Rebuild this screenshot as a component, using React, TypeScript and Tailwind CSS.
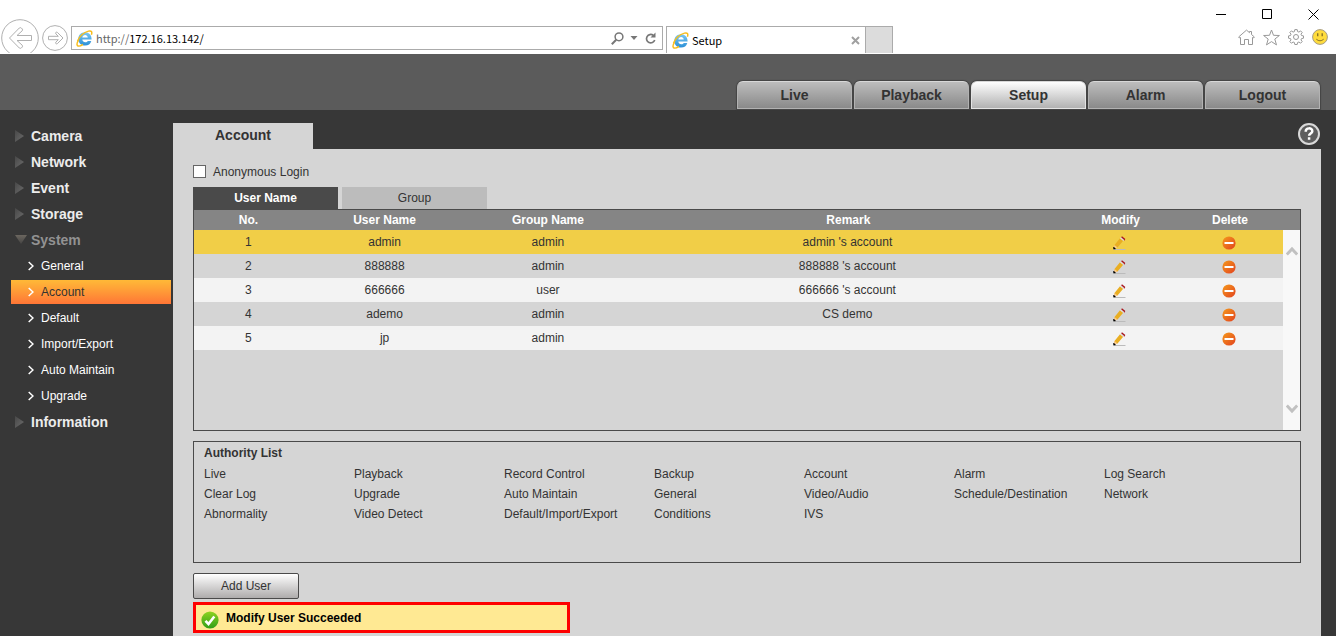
import { useState } from 'react';
import type { ReactNode } from 'react';

type User = {
  name: string;
  group: string;
  remark: string;
};

const navTabs = ['Live', 'Playback', 'Setup', 'Alarm', 'Logout'];

const menuTop = ['Camera', 'Network', 'Event', 'Storage'];

const systemItems = [
  'General',
  'Account',
  'Default',
  'Import/Export',
  'Auto Maintain',
  'Upgrade',
];

const users: User[] = [
  { name: 'admin', group: 'admin', remark: "admin 's account" },
  { name: '888888', group: 'admin', remark: "888888 's account" },
  { name: '666666', group: 'user', remark: "666666 's account" },
  { name: 'ademo', group: 'admin', remark: 'CS demo' },
  { name: 'jp', group: 'admin', remark: '' },
];

const authorities = [
  'Live',
  'Playback',
  'Record Control',
  'Backup',
  'Account',
  'Alarm',
  'Log Search',
  'Clear Log',
  'Upgrade',
  'Auto Maintain',
  'General',
  'Video/Audio',
  'Schedule/Destination',
  'Network',
  'Abnormality',
  'Video Detect',
  'Default/Import/Export',
  'Conditions',
  'IVS',
];

const IeLogo = () => (
  <svg width="17" height="17" viewBox="0 0 17 17" fill="none" className="shrink-0">
    <defs>
      <linearGradient id="ie" x1="0" y1="0" x2="0" y2="1">
        <stop offset="0" stopColor="#7cc8f2" />
        <stop offset="1" stopColor="#2b8fd6" />
      </linearGradient>
    </defs>
    <path
      d="M9 2.300c4.200 0 6.600 2.900 6.600 7.300H6.300c.3 1.900 1.400 2.700 3 2.700 1.200 0 2-.4 2.500-1.300h3.500c-.8 2.900-3 4.600-6.200 4.600-4.200 0-6.700-2.700-6.700-6.600 0-3.900 2.600-6.700 6.600-6.700Zm-2.700 5.200h5.500c-.2-1.600-1.200-2.500-2.700-2.500s-2.500.9-2.800 2.500Z"
      fill="url(#ie)"
      fillRule="evenodd"
    />
    <path
      d="M7 14.500c-2.400 1.500-4.600 2-5.500 1.100-.9-.9-.4-3 1-5.400M1.500 11C3.500 6.500 8 2.300 12.500 1.100c2.800-.7 4 .5 2.900 3.600"
      stroke="#f8bd1c"
      strokeWidth="1.500"
    />
  </svg>
);

const BackButton = () => (
  <button aria-label="Back" className="shrink-0">
    <svg width="38" height="38" viewBox="0 0 38 38" fill="none" stroke="#b0b0b0">
      <circle cx="19" cy="19" r="18.300" />
      <path d="M8.500 19 18.300 9q1-.8 2 0l.9.900q.8 1 0 1.900L16 16.500h14.500v5H16l5.200 4.700q.8 1 0 1.900l-.9.900q-1 .8-2 0Z" />
    </svg>
  </button>
);

const ForwardButton = () => (
  <button aria-label="Forward" className="mt-[6px] shrink-0">
    <svg width="26" height="26" viewBox="0 0 26 26" fill="none" stroke="#b0b0b0">
      <circle cx="13" cy="13" r="12.400" />
      <path d="M21 13l-5.600-5.600q-.9-.6-1.500 0t0 1.500l2.400 2.400H6.500v3.400h9.800l-2.400 2.400q-.6.900 0 1.500t1.500 0Z" />
    </svg>
  </button>
);

const WindowControls = () => (
  <div className="flex h-[26px] items-center justify-end gap-[35px] pr-[17px] pt-[2px]">
    <button aria-label="Minimize">
      <svg width="11" height="11" viewBox="0 0 11 11" stroke="#000">
        <path d="M0 5.500h10" />
      </svg>
    </button>
    <button aria-label="Maximize">
      <svg width="11" height="11" viewBox="0 0 11 11" fill="none" stroke="#000">
        <path d="M.5.500h9v9h-9z" />
      </svg>
    </button>
    <button aria-label="Close">
      <svg width="11" height="11" viewBox="0 0 11 11" stroke="#000">
        <path d="M.5.500l10 10M10.500.500l-10 10" />
      </svg>
    </button>
  </div>
);

const ToolIcons = () => (
  <div className="ml-auto flex h-[22px] items-center gap-2 pr-2">
    <button aria-label="Home">
      <svg width="17" height="17" viewBox="0 0 17 17" fill="none" stroke="#999">
        <path d="M2.500 8.500 1.200 8.800.6 8 8.500 1.100 11.500 3.700V2.500h2v3l2.900 2.500-.6.800-1.300-.3v7h-4v-5h-4v5h-4Z" />
      </svg>
    </button>
    <button aria-label="Favorites">
      <svg width="17" height="17" viewBox="0 0 17 17" fill="none" stroke="#999">
        <path d="M8.500 1l2 5.300 5.900.2-4.600 3.600 1.700 5.800-5-3.300-5 3.300 1.700-5.800L.6 6.500l5.900-.2Z" />
      </svg>
    </button>
    <button aria-label="Tools">
      <svg width="16" height="16" viewBox="0 0 16 16" fill="none" stroke="#999">
        <path d="M6.800.6h2.400l.4 2 1.300.5 1.700-1.200 1.600 1.600L13 5.200l.5 1.300 2 .4v2.300l-2 .4-.5 1.300 1.200 1.700-1.600 1.600-1.700-1.200-1.300.5-.4 2H6.800l-.4-2-1.300-.5-1.700 1.200-1.600-1.600L3 10.900l-.5-1.300-2-.4V6.900l2-.4L3 5.200 1.800 3.500l1.600-1.600 1.700 1.200 1.300-.5Z" />
        <circle cx="8" cy="8" r="2.500" />
      </svg>
    </button>
    <button aria-label="Send a smile">
      <svg width="16" height="16" viewBox="0 0 16 16" fill="none">
        <circle cx="8" cy="8" r="7.400" fill="#ffdc3c" stroke="#a59c86" />
        <path d="M5.700 4.200v3M10.200 4.200v3" stroke="#8a7426" strokeWidth="1.400" />
        <path d="M4.300 10.200q3.700 3.200 7.400 0" stroke="#8a7426" />
      </svg>
    </button>
  </div>
);

const BrowserBar = () => (
  <div className="h-[54px] overflow-hidden bg-white font-['Noto_Sans_CJK_JP',sans-serif] text-[11px] text-black">
    <WindowControls />
    <div className="flex h-[27px] items-start">
      <div className="-mt-[7px] flex h-[34px] items-start gap-[3px] overflow-hidden pl-[1px]">
        <BackButton />
        <ForwardButton />
      </div>
      <div className="ml-[3px] flex h-6 w-[592px] items-center border border-[#ababab] px-1">
        <IeLogo />
        <label htmlFor="address" className="pl-[3px] text-[#666]">
          http://
        </label>
        <input
          id="address"
          defaultValue="172.16.13.142/"
          className="min-w-0 flex-1 bg-transparent outline-none"
        />
        <button aria-label="Search">
          <svg width="13" height="13" viewBox="0 0 13 13" fill="none" stroke="#777">
            <circle cx="8" cy="4.800" r="3.900" strokeWidth="1.500" />
            <path d="M5.200 7.800.8 12.200" strokeWidth="2" />
          </svg>
        </button>
        <button aria-label="Show address list" className="ml-[6px]">
          <svg width="8" height="4" viewBox="0 0 8 4" fill="#777">
            <path d="M.5 0h7L4 4Z" />
          </svg>
        </button>
        <button aria-label="Refresh" className="ml-[7px] mr-[1px]">
          <svg width="12" height="13" viewBox="0 0 12 13" fill="none" stroke="#777">
            <path d="M8.200 3.300A4.200 4.200 0 1 0 9.700 8" strokeWidth="1.700" />
            <path d="M10.500.500v5H5.500Z" fill="#777" stroke="none" />
          </svg>
        </button>
      </div>
      <div className="ml-[3px] flex h-[27px] w-[200px] items-center border border-b-0 border-[#ababab] px-[5px]">
        <IeLogo />
        <span className="flex-1 pl-[3px]">Setup</span>
        <button aria-label="Close tab">
          <svg width="9" height="9" viewBox="0 0 9 9" stroke="#a0a0a0" strokeWidth="2">
            <path d="M1 1l7 7M8 1 1 8" />
          </svg>
        </button>
      </div>
      <button
        aria-label="New tab"
        className="h-[27px] w-[27px] border border-b-0 border-l-0 border-[#ababab] bg-[#dcdcdc]"
      />
      <ToolIcons />
    </div>
  </div>
);

const Header = () => (
  <header className="flex h-14 items-end justify-end gap-[2px] bg-[#5b5b5b] pb-px pr-4">
    {navTabs.map((tab) => (
      <button
        key={tab}
        className={`h-7 w-[115px] rounded-t-md border border-t-[#d8d8d8] text-sm font-bold text-[#333] shadow-[0_0_1px_1px_#444] ${
          tab === 'Setup'
            ? 'border-[#e4e4e4] bg-linear-to-b from-white to-[#b2b2b2]'
            : 'border-[#b2b2b2] bg-linear-to-b from-[#bdbdbd] to-[#8a8a8a]'
        }`}
      >
        {tab}
      </button>
    ))}
  </header>
);

const MenuItem = ({ label, open }: { label: string; open?: boolean }) => (
  <a
    href="#"
    className={`flex h-[26px] items-center pl-[15px] text-sm font-bold ${
      open ? 'text-[#929292]' : 'text-[#ececec]'
    }`}
  >
    <svg width="16" height="12" viewBox="0 0 16 12">
      <defs>
        <linearGradient id="arrow" x1="0" y1="0" x2="1" y2="1">
          <stop offset="0" stopColor="#484848" />
          <stop offset="1" stopColor="#6c6c6c" />
        </linearGradient>
        <linearGradient id="arrowOpen" x1="0" y1="0" x2="0" y2="1">
          <stop offset="0" stopColor="#6b665f" />
          <stop offset="1" stopColor="#454443" />
        </linearGradient>
      </defs>
      {open ? (
        <path d="M0 1h12L6 10Z" fill="url(#arrowOpen)" />
      ) : (
        <path d="M0 0v12l9-6Z" fill="url(#arrow)" />
      )}
    </svg>
    {label}
  </a>
);

const Sidebar = () => {
  const [active, setActive] = useState('Account');

  return (
    <nav className="w-[173px] shrink-0 pt-[13px]">
      {menuTop.map((m) => (
        <MenuItem key={m} label={m} />
      ))}
      <MenuItem label="System" open />
      <div className="flex flex-col gap-[2px] py-px pl-[11px] pr-[2px]">
        {systemItems.map((item) => (
          <a
            key={item}
            href="#"
            onClick={() => setActive(item)}
            className={`flex h-6 items-center gap-[7px] pl-[17px] text-xs ${
              item === active
                ? 'bg-linear-to-b from-[#ffb937] to-[#ff7536] text-[#333]'
                : 'text-white'
            }`}
          >
            <svg width="6" height="10" viewBox="0 0 6 10" fill="none" stroke="#fff" strokeWidth="1.500">
              <path d="M.7 1 5 5 .7 9" />
            </svg>
            {item}
          </a>
        ))}
      </div>
      <MenuItem label="Information" />
    </nav>
  );
};

const PencilIcon = () => (
  <svg width="13" height="14" viewBox="0 0 13 14">
    <path d="M.5 13.500h12" stroke="#bbb" />
    <path d="M1.500 9 7 2.200 10.200 4.800 4.500 11.500 1.300 12Z" fill="#e9ae22" />
    <path d="M1.500 9 4.500 11.500 2 12.500 1 11.500Z" fill="#fbc98a" />
    <path d="M8 1.500 9 .3l3.300 2.700-1 1.700Z" fill="#a8151c" />
    <path d="M7 2.300l1-1 3.200 2.700-.9 1Z" fill="#ddd" />
    <path d="M.3 11h1.200v1h1v1.200H.3Z" fill="#000" />
  </svg>
);

const DeleteIcon = () => (
  <svg width="14" height="14" viewBox="0 0 14 14">
    <defs>
      <linearGradient id="del" x1="0" y1="0" x2="1" y2="1">
        <stop offset="0" stopColor="#f59a1c" />
        <stop offset="1" stopColor="#e2421f" />
      </linearGradient>
    </defs>
    <circle cx="7" cy="7" r="6.600" fill="url(#del)" />
    <path d="M2.500 7h9" stroke="#fff" strokeWidth="2" />
  </svg>
);

const rowColor = (i: number) => {
  if (i === 0) return 'bg-[#f1ce47]';
  return i % 2 ? 'bg-[#d5d5d5]' : 'bg-[#f3f3f3]';
};

const IconCell = ({ label, children }: { label: string; children: ReactNode }) => (
  <td className="p-0">
    <button aria-label={label} className="mx-auto block pt-[2px]">
      {children}
    </button>
  </td>
);

const UserTable = () => (
  <div className="flex h-[222px] border border-[#4a4a4a]">
    <div className="flex-1">
      <table className="w-full table-fixed border-collapse text-center">
        <thead>
          <tr className="h-5 bg-[#858585] text-white">
            <th className="w-[10%] p-0">No.</th>
            <th className="w-[15%] p-0">User Name</th>
            <th className="w-[15%] p-0">Group Name</th>
            <th className="w-[40%] p-0 pl-[2px]">Remark</th>
            <th className="w-[10%] p-0 pl-[2px]">Modify</th>
            <th className="w-[10%] p-0 pl-[3px]">Delete</th>
          </tr>
        </thead>
        <tbody>
          {users.map((u, i) => (
            <tr key={u.name} className={`h-6 ${rowColor(i)}`}>
              <td className="p-0">{i + 1}</td>
              <td className="p-0">{u.name}</td>
              <td className="p-0">{u.group}</td>
              <td className="p-0">{u.remark}</td>
              <IconCell label={`Modify ${u.name}`}>
                <PencilIcon />
              </IconCell>
              <IconCell label={`Delete ${u.name}`}>
                <DeleteIcon />
              </IconCell>
            </tr>
          ))}
        </tbody>
      </table>
    </div>
    <div className="flex w-[17px] flex-col border-t-[20px] border-[#858585] bg-[#f8f8f8]">
      <div className="flex flex-1 flex-col items-center justify-between py-4">
        <svg width="12" height="10" viewBox="0 0 12 10" fill="none" stroke="#c1c1c1" strokeWidth="3">
          <path d="M.8 8.500 6 3 11.200 8.500" />
        </svg>
        <svg width="12" height="10" viewBox="0 0 12 10" fill="none" stroke="#c1c1c1" strokeWidth="3">
          <path d="M.8 1.500 6 7 11.200 1.500" />
        </svg>
      </div>
    </div>
  </div>
);

const AuthorityList = () => (
  <section className="mt-[10px] h-[122px] border border-[#4a4a4a] px-[10px] pt-[1px]">
    <h2 className="h-[21px] font-bold leading-5">Authority List</h2>
    <ul className="grid grid-cols-[repeat(auto-fill,150px)] leading-5">
      {authorities.map((a) => (
        <li key={a}>{a}</li>
      ))}
    </ul>
  </section>
);

const HelpIcon = () => (
  <svg width="24" height="24" viewBox="0 0 24 24" fill="none">
    <circle cx="12" cy="11" r="10" fill="#5e5e5e" stroke="#d9d9d9" strokeWidth="2" />
    <path
      d="M8.700 8.700C8.700 4.200 15.300 4.500 15.300 8.200c0 2.400-3.200 2.300-3.200 4.600M12.100 14.300v2.500"
      stroke="#fff"
      strokeWidth="2.500"
    />
  </svg>
);

const SuccessIcon = () => (
  <svg width="18" height="18" viewBox="0 0 18 18" fill="none">
    <defs>
      <linearGradient id="ok" x1="0" y1="0" x2="0" y2="1">
        <stop offset="0" stopColor="#8fd321" />
        <stop offset="1" stopColor="#2f9e17" />
      </linearGradient>
    </defs>
    <circle cx="9" cy="9" r="8.600" fill="url(#ok)" />
    <path d="M4.500 9.800 7.500 13 13.300 5.500" stroke="#fff" strokeWidth="2.600" />
  </svg>
);

const AccountPanel = () => {
  const [anonymous, setAnonymous] = useState(false);

  return (
    <main className="flex flex-1 flex-col pr-[15px] pt-[13px]">
      <div className="flex h-[26px] items-start justify-between">
        <h1 className="h-[26px] w-[140px] bg-[#d5d5d5] text-center text-sm font-bold leading-6">
          Account
        </h1>
        <button aria-label="Help">
          <HelpIcon />
        </button>
      </div>
      <div className="flex-1 bg-[#d5d5d5] px-5 pb-[3px] pt-4">
        <div className="flex h-[13px] items-center gap-[7px]">
          <input
            id="anonymous"
            type="checkbox"
            checked={anonymous}
            onChange={(e) => setAnonymous(e.target.checked)}
            className="h-[13px] w-[13px] appearance-none border border-[#666] bg-white checked:bg-[#4a4a4a]"
          />
          <label htmlFor="anonymous">Anonymous Login</label>
        </div>
        <div className="mt-[9px] flex gap-1">
          <button className="h-[22px] w-[145px] bg-[#4a4a4a] font-bold text-white">
            User Name
          </button>
          <button className="h-[22px] w-[145px] bg-[#bcbcbc]">Group</button>
        </div>
        <UserTable />
        <AuthorityList />
        <button className="mt-[10px] block h-[26px] w-[106px] rounded-xs border border-[#4a4a4a] bg-linear-to-b from-white to-[#aeacac]">
          Add User
        </button>
        <div
          role="status"
          className="mt-[3px] flex h-[31px] w-[377px] border-3 border-[#fe0000] bg-[#ffe993] pl-[5px] font-bold text-black"
        >
          <div className="pt-[6px]">
            <SuccessIcon />
          </div>
          <span className="pl-[7px] leading-[26px]">Modify User Succeeded</span>
        </div>
      </div>
    </main>
  );
};

export default function App() {
  return (
    <div className="flex min-h-screen flex-col bg-[#373737] font-['Liberation_Sans',Arial,sans-serif] text-xs text-[#333]">
      <BrowserBar />
      <Header />
      <div className="flex flex-1">
        <Sidebar />
        <AccountPanel />
      </div>
    </div>
  );
}
